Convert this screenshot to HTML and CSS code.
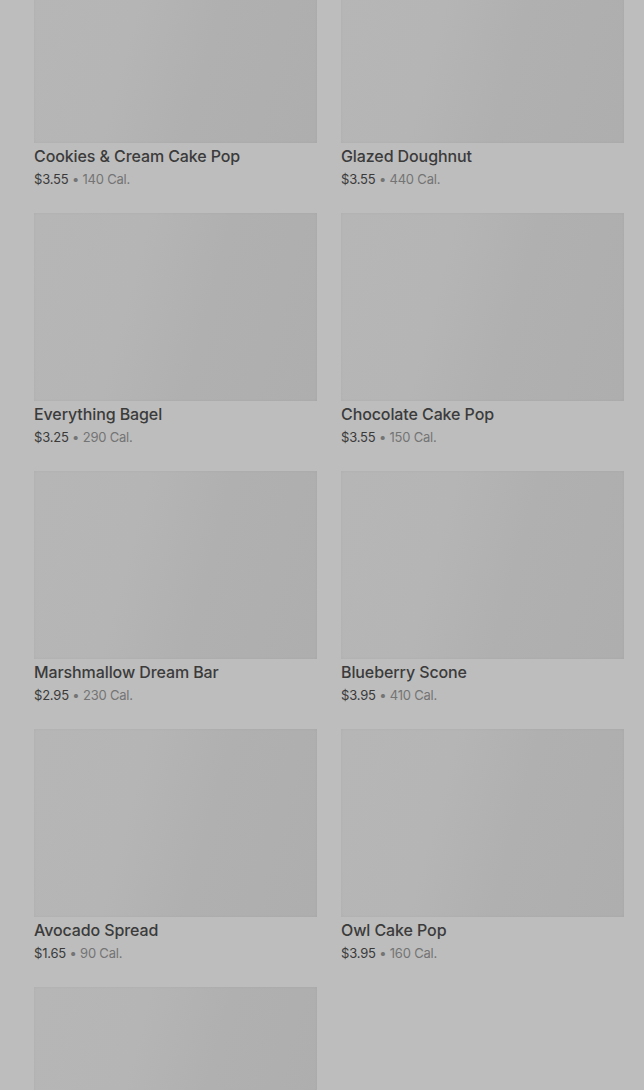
FILE: index.html
```html
<!DOCTYPE html>
<html lang="en">
<head>
    <meta charset="UTF-8">
    <meta name="viewport" content="width=device-width, initial-scale=1.0">
    <title>Bakery</title>
    <link rel="stylesheet" href="styles.css">
</head>
<body>
    <div class="menu-grid">
        <div class="product">
            <div class="product-img"></div>
            <div class="product-name">Cookies &amp; Cream Cake Pop</div>
            <div class="product-meta"><span class="price">$3.55</span> • 140 Cal.</div>
        </div>
        <div class="product">
            <div class="product-img"></div>
            <div class="product-name">Glazed Doughnut</div>
            <div class="product-meta"><span class="price">$3.55</span> • 440 Cal.</div>
        </div>
        <div class="product">
            <div class="product-img"></div>
            <div class="product-name">Everything Bagel</div>
            <div class="product-meta"><span class="price">$3.25</span> • 290 Cal.</div>
        </div>
        <div class="product">
            <div class="product-img"></div>
            <div class="product-name">Chocolate Cake Pop</div>
            <div class="product-meta"><span class="price">$3.55</span> • 150 Cal.</div>
        </div>
        <div class="product">
            <div class="product-img"></div>
            <div class="product-name">Marshmallow Dream Bar</div>
            <div class="product-meta"><span class="price">$2.95</span> • 230 Cal.</div>
        </div>
        <div class="product">
            <div class="product-img"></div>
            <div class="product-name">Blueberry Scone</div>
            <div class="product-meta"><span class="price">$3.95</span> • 410 Cal.</div>
        </div>
        <div class="product">
            <div class="product-img"></div>
            <div class="product-name">Avocado Spread</div>
            <div class="product-meta"><span class="price">$1.65</span> • 90 Cal.</div>
        </div>
        <div class="product">
            <div class="product-img"></div>
            <div class="product-name">Owl Cake Pop</div>
            <div class="product-meta"><span class="price">$3.95</span> • 160 Cal.</div>
        </div>
        <div class="product">
            <div class="product-img"></div>
        </div>
    </div>
</body>
</html>
```

FILE: styles.css
```css
body {
    font-family: Inter, "Noto Sans", sans-serif;
    background-color: #bdbdbd;
    color: #3a3a3a;
    margin: 0;
    padding: 0;
    height: 1090px;
    overflow: hidden;
}
.menu-grid {
    display: grid;
    grid-template-columns: 283px 283px;
    column-gap: 24px;
    row-gap: 24px;
    margin-top: -45px;
    padding: 0 20px 0 34px;
}
.product-img {
    height: 188px;
    background: linear-gradient(105deg, #b6b6b6 0%, #b5b5b5 35%, #b0b0b0 60%, #aeaeae 100%);
    box-shadow: inset 0 0 3px rgba(0, 0, 0, 0.05);
}
.product-name {
    margin-top: 3px;
    font-size: 16px;
    line-height: 20px;
    font-weight: 500;
    letter-spacing: -0.1px;
    color: #3b3b3b;
}
.product-meta {
    margin-top: 3px;
    font-size: 13px;
    line-height: 20px;
    letter-spacing: -0.2px;
    color: #747474;
}
.price {
    color: #3a3a3a;
}
```
